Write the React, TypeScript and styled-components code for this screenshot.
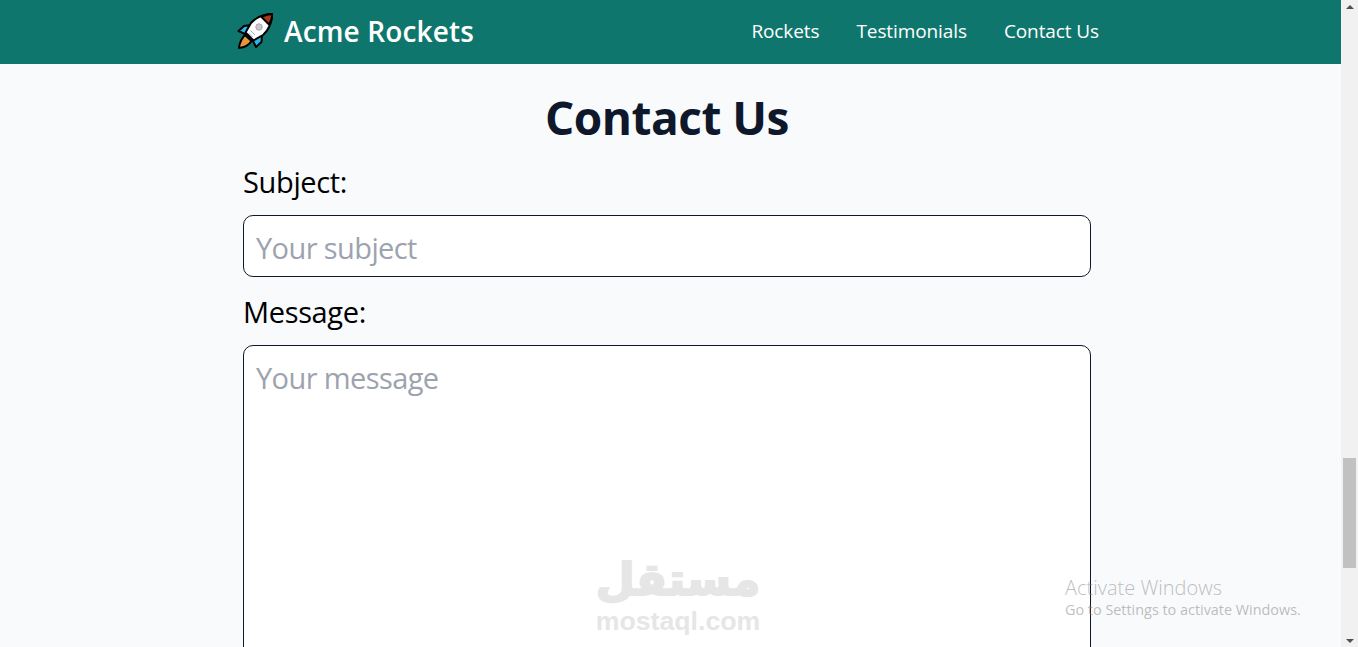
import React from 'react';
import styled, { createGlobalStyle } from 'styled-components';

const GlobalStyle = createGlobalStyle`
  html, body {
    margin: 0;
    height: 100%;
    overflow: hidden;
  }
  * {
    box-sizing: border-box;
  }
  body {
    font-family: "Open Sans", "Noto Sans", sans-serif;
    background: #f8fafc;
  }
`;

function RocketIcon() {
  return (
    <svg width="36" height="36" viewBox="0 0 36 36">
      <g stroke="#000" strokeWidth="2" strokeLinejoin="round">
        <path d="M8 22 C5 25 2.5 29 2 35 C8 34.5 12 32 14.5 28 Z" fill="#e8963a" />
        <path d="M14 12 L7 13 L1.5 18 L9 21.5 Z" fill="#29b6e8" />
        <path d="M25 22 L24.5 29 L19 34 L15.5 27 Z" fill="#29b6e8" />
        <path d="M35.5 1 C29 1 20 3.5 14 10 L8.5 19.5 L16.5 27.5 L26 22 C32.5 16 35 8 35.5 1 Z" fill="#fff" />
        <path d="M35.5 1 C32 1 28 2 24.5 4 L32 11.5 C34.2 8 35.2 4.5 35.5 1 Z" fill="#a83a18" />
      </g>
      <circle cx="22" cy="14" r="3.2" fill="#c9c9cf" stroke="#a5a5ab" strokeWidth="1" />
      <path d="M11.5 20 L15.5 24 M13.5 17.5 L18 22" stroke="#a9b0b8" strokeWidth="1" />
    </svg>
  );
}

export default function App() {
  return (
    <>
      <GlobalStyle />
      <Page>
        <Main>
          <Header>
            <Brand>
              <RocketIcon />
              <BrandName>Acme Rockets</BrandName>
            </Brand>
            <Nav>
              <NavLink href="#rockets">Rockets</NavLink>
              <NavLink href="#testimonials">Testimonials</NavLink>
              <NavLink href="#contact">Contact Us</NavLink>
            </Nav>
          </Header>
          <Form onSubmit={(e) => e.preventDefault()}>
            <Title>Contact Us</Title>
            <Label htmlFor="subject">Subject:</Label>
            <Input id="subject" type="text" placeholder="Your subject" />
            <Label htmlFor="message">Message:</Label>
            <TextArea id="message" placeholder="Your message" />
          </Form>
        </Main>
        <Scrollbar>
          <ArrowUp />
          <Thumb />
          <ArrowDown />
        </Scrollbar>
        <Watermark>
          <WatermarkArabic>مستقل</WatermarkArabic>
          <WatermarkLatin>mostaql.com</WatermarkLatin>
        </Watermark>
        <ActivateNotice>
          <ActivateTitle>Activate Windows</ActivateTitle>
          <ActivateHint>Go to Settings to activate Windows.</ActivateHint>
        </ActivateNotice>
      </Page>
    </>
  );
}

const Page = styled.div`
  position: relative;
  display: grid;
  grid-template-columns: 1fr 17px;
  height: 647px;
  overflow: hidden;
`;

const Main = styled.main`
  min-width: 0;
`;

const Header = styled.header`
  height: 64px;
  padding: 0 242px 2px 237px;
  display: flex;
  align-items: center;
  justify-content: space-between;
  background: #0f766e;
  color: #fff;
`;

const Brand = styled.div`
  display: flex;
  align-items: center;
  gap: 11px;
`;

const BrandName = styled.span`
  font-size: 28px;
  font-weight: 600;
  letter-spacing: 0.15px;
`;

const Nav = styled.nav`
  display: flex;
  gap: 37px;
`;

const NavLink = styled.a`
  color: #fff;
  font-size: 19px;
  text-decoration: none;
  letter-spacing: -0.1px;
`;

const Form = styled.form`
  width: 848px;
  margin-left: 243px;
  display: flex;
  flex-direction: column;
`;

const Title = styled.h1`
  margin: 19px 0 11px;
  font-size: 46px;
  line-height: 68px;
  font-weight: 700;
  text-align: center;
  color: #0f172a;
  letter-spacing: -0.5px;
`;

const Label = styled.label`
  font-size: 29px;
  line-height: 40px;
  color: #000;
  letter-spacing: -0.35px;
  margin-bottom: 13px;
`;

const Input = styled.input`
  height: 62px;
  padding: 2px 12px 0;
  margin-bottom: 15px;
  border: 1px solid #0f172a;
  border-radius: 10px;
  background: #fff;
  font: inherit;
  font-size: 29px;
  letter-spacing: -0.6px;
  outline: none;
  &::placeholder {
    color: #9ca3af;
    opacity: 1;
  }
`;

const TextArea = styled.textarea`
  height: 420px;
  padding: 12px;
  border: 1px solid #0f172a;
  border-radius: 10px;
  background: #fff;
  font: inherit;
  font-size: 29px;
  line-height: 40px;
  letter-spacing: -0.6px;
  outline: none;
  resize: none;
  &::placeholder {
    color: #9ca3af;
    opacity: 1;
  }
`;

const Scrollbar = styled.div`
  display: flex;
  flex-direction: column;
  align-items: center;
  background: #f1f1f1;
  padding-top: 5px;
`;

const ArrowUp = styled.div`
  width: 0;
  height: 0;
  border-left: 4px solid transparent;
  border-right: 4px solid transparent;
  border-bottom: 4px solid #505050;
`;

const ArrowDown = styled.div`
  width: 0;
  height: 0;
  margin-top: 71px;
  border-left: 4px solid transparent;
  border-right: 4px solid transparent;
  border-top: 4px solid #505050;
`;

const Thumb = styled.div`
  width: 13px;
  height: 110px;
  margin-top: 449px;
  background: #c1c1c1;
`;

const Watermark = styled.div`
  position: absolute;
  left: 595px;
  top: 554px;
  width: 166px;
  text-align: center;
  color: #e6e6e6;
  pointer-events: none;
`;

const WatermarkArabic = styled.div`
  font-family: "DejaVu Sans", sans-serif;
  font-size: 45px;
  line-height: 52px;
  font-weight: 700;
  -webkit-text-stroke: 2px #e6e6e6;
`;

const WatermarkLatin = styled.div`
  font-family: "Liberation Sans", Arial, sans-serif;
  font-size: 26.7px;
  line-height: 30px;
  font-weight: 700;
`;

const ActivateNotice = styled.div`
  position: absolute;
  left: 1065px;
  top: 575px;
  color: rgba(130, 125, 125, 0.5);
  pointer-events: none;
`;

const ActivateTitle = styled.div`
  font-size: 20px;
  line-height: 25px;
  font-weight: 300;
`;

const ActivateHint = styled.div`
  font-size: 14.4px;
  line-height: 20px;
`;
